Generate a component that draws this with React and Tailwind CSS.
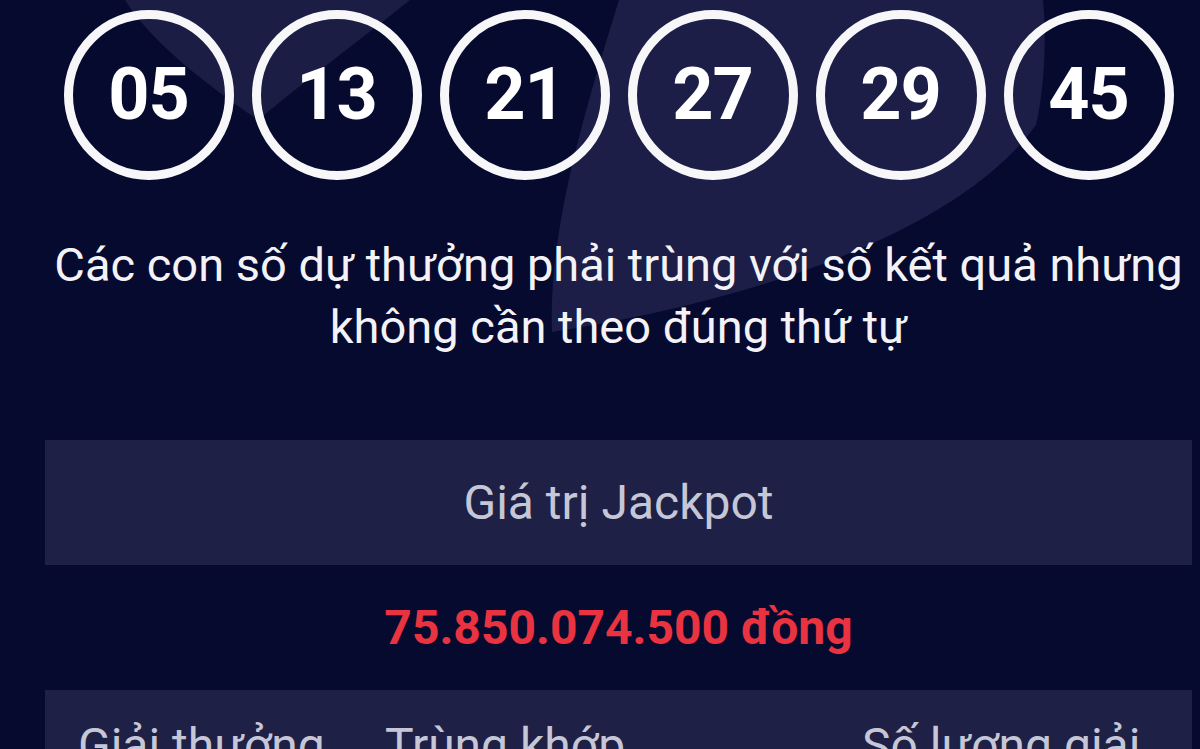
import React from "react";

const numbers = ["05", "13", "21", "27", "29", "45"];

const Ball = ({ value }) => (
  <div className="w-[170px] h-[170px] rounded-full border-[9px] border-[#f7f7f9] flex items-center justify-center">
    <span className="text-[72px] leading-none font-bold text-white tracking-[-1px]">{value}</span>
  </div>
);

// faint logo shapes behind the results
const Backdrop = () => (
  <svg
    className="absolute inset-0 w-full h-full"
    viewBox="0 0 1200 749"
    preserveAspectRatio="none"
  >
    <path d="M125 0 L410 0 C360 40 300 85 258 120 C200 80 150 40 125 0 Z" fill="#1b1d45" />
    <path
      d="M619 0 C585 110 548 230 552 332 C760 300 960 230 1036 125 C1046 80 1046 30 1043 0 Z"
      fill="#1c1e47"
    />
  </svg>
);

export default function App() {
  return (
    <div
      className="relative w-[1200px] h-[749px] overflow-hidden bg-[#070a2f]"
      style={{ fontFamily: "Roboto, 'Noto Sans', sans-serif" }}
    >
      <Backdrop />
      <div className="relative ml-[45px] w-[1147px] flex flex-col items-center">
        <div className="flex gap-[18px] pt-[10px]">
          {numbers.map((n) => (
            <Ball key={n} value={n} />
          ))}
        </div>

        <p className="mt-[54px] text-center text-[47px] leading-[62px] text-[#f3f3f7]">
          Các con số dự thưởng phải trùng với số kết quả nhưng
          <br />
          không cần theo đúng thứ tự
        </p>

        <div className="mt-[82px] w-full h-[125px] bg-[#1f2046] flex items-center justify-center">
          <span className="text-[48px] text-[#c6c7d6]">Giá trị Jackpot</span>
        </div>

        <div className="mt-[33px] h-[60px] flex items-center text-[48px] font-bold text-[#ea3340]">
          75.850.074.500 đồng
        </div>

        <div className="mt-[32px] w-full h-[140px] bg-[#1f2046] pt-[28px] text-[48px] leading-[56px] text-[#c6c7d6] flex">
          <span className="ml-[33px] w-[307px]">Giải thưởng</span>
          <span className="w-[477px]">Trùng khớp</span>
          <span>Số lượng giải</span>
        </div>
      </div>
    </div>
  );
}
